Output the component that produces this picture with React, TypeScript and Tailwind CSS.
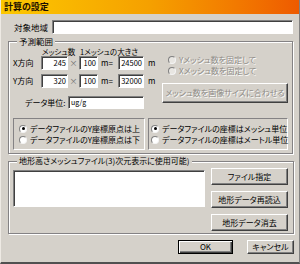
import React from "react";

const sunken =
  "bg-white border border-t-[#808080] border-l-[#808080] border-r-white border-b-white shadow-[inset_1px_1px_0_#404040]";
const raised =
  "border border-t-white border-l-white border-r-[#404040] border-b-[#404040] shadow-[inset_-1px_-1px_0_#808080] flex items-center justify-center whitespace-nowrap";
const disabledText = "text-[#8e8b86] [text-shadow:1px_1px_0_#ffffff]";

const Radio = ({ checked = false, disabled = false }: { checked?: boolean; disabled?: boolean }) => (
  <span
    className={
      "w-[8px] h-[8px] rounded-full border border-t-[#808080] border-l-[#808080] border-r-[#f4f4f4] border-b-[#f4f4f4] flex items-center justify-center shrink-0 " +
      (disabled ? "bg-[#e8e6e2]" : "bg-white")
    }
  >
    {checked && <span className="w-[3px] h-[3px] rounded-full bg-black" />}
  </span>
);

const NumBox = ({ value, w }: { value: string; w: string }) => (
  <div className={sunken + " h-[14px] text-right pr-[1px] leading-[12px] text-[7.5px] " + w}>{value}</div>
);

const MeshRow = ({ label, count, size, total }: { label: string; count: string; size: string; total: string }) => (
  <div className="flex items-center h-[14px]">
    <span className="w-[28px]">{label}</span>
    <NumBox value={count} w="w-[27px]" />
    <span className="w-[11px] text-center text-[#707070]">×</span>
    <NumBox value={size} w="w-[19px]" />
    <span className="w-[20px] pl-[3px]">m=</span>
    <NumBox value={total} w="w-[26px]" />
    <span className="pl-[4px]">m</span>
  </div>
);

export default function App() {
  return (
    <div className="w-[300px] h-[264px] bg-[#d5d1ca] flex flex-col overflow-hidden whitespace-nowrap border-l border-l-[#eeeae4] border-r border-r-[#808080] border-b-2 border-b-[#505050] text-[8px] leading-[10px] text-black font-['Noto_Sans_CJK_JP','Liberation_Sans',sans-serif] [font-feature-settings:'palt']">
      <div className="h-[14px] shrink-0 bg-gradient-to-r from-[#fcc800] via-[#f5a000] to-[#ee5a00] pl-[3px] text-[9px] leading-[14px] font-bold text-[#1a0e00]">
        計算の設定
      </div>

      <div className="flex items-center mt-[6px] h-[14px]">
        <span className="w-[51px] pl-[13px] text-[8.5px]">対象地域</span>
        <div className={sunken + " w-[241px] h-[14px]"} />
      </div>

      <fieldset className="ml-[7px] mt-[2px] w-[285px] h-[118px] border border-[#848284] shadow-[inset_1px_1px_0_#fff,1px_1px_0_#fff] pl-[4px]">
        <legend className="ml-[4px] px-[2px] bg-[#d5d1ca] leading-[10px] text-[8.5px]">予測範囲</legend>
        <div className="flex">
          <div className="w-[149px] flex flex-col pt-[1px]">
            <div className="flex h-[9px] leading-[9px] text-[7.5px]">
              <span className="ml-[29px] w-[38px]">メッシュ数</span>
              <span>1メッシュの大きさ</span>
            </div>
            <MeshRow label="X方向" count="245" size="100" total="24500" />
            <div className="mt-[4px]">
              <MeshRow label="Y方向" count="320" size="100" total="32000" />
            </div>
            <div className="flex items-center mt-[8px] h-[13px]">
              <span className="pl-[12px] w-[55px]">データ単位:</span>
              <div className={sunken + " w-[76px] h-[13px] pl-[2px] leading-[11px] text-[7px]"}>ug/g</div>
            </div>
          </div>
          <div className="flex flex-col pt-[9px]">
            <div className="flex flex-col gap-[2px] pl-[6px]">
              <div className="flex items-center gap-[3px] h-[9px]">
                <Radio disabled />
                <span className={disabledText}>Yメッシュ数を固定して</span>
              </div>
              <div className="flex items-center gap-[3px] h-[9px]">
                <Radio disabled />
                <span className={disabledText}>Xメッシュ数を固定して</span>
              </div>
            </div>
            <div className={raised + " mt-[8px] w-[126px] h-[20px] " + disabledText}>
              メッシュ数を画像サイズに合わせる
            </div>
          </div>
        </div>
        <div className="flex gap-[3px] mt-[9px]">
          <div className="w-[132px] h-[32px] border border-t-[#848284] border-l-[#848284] border-r-white border-b-white flex flex-col justify-center gap-[2px] pl-[5px]">
            <div className="flex items-center gap-[3px] h-[9px]">
              <Radio checked />
              <span>データファイルのY座標原点は上</span>
            </div>
            <div className="flex items-center gap-[3px] h-[9px]">
              <Radio />
              <span>データファイルのY座標原点は下</span>
            </div>
          </div>
          <div className="w-[140px] h-[32px] border border-t-[#848284] border-l-[#848284] border-r-white border-b-white flex flex-col justify-center gap-[2px] pl-[2px]">
            <div className="flex items-center gap-[3px] h-[9px]">
              <Radio checked />
              <span>データファイルの座標はメッシュ単位</span>
            </div>
            <div className="flex items-center gap-[3px] h-[9px]">
              <Radio />
              <span>データファイルの座標はメートル単位</span>
            </div>
          </div>
        </div>
      </fieldset>

      <fieldset className="ml-[7px] mt-[2px] w-[286px] h-[78px] border border-[#848284] shadow-[inset_1px_1px_0_#fff,1px_1px_0_#fff] pl-[4px] pt-[2px]">
        <legend className="ml-[4px] px-[2px] bg-[#d5d1ca] leading-[10px]">
          地形高さメッシュファイル(3)次元表示に使用可能)
        </legend>
        <div className="flex gap-[6px]">
          <div className={sunken + " w-[192px] h-[37px] mt-[2px]"} />
          <div className="flex flex-col gap-[6px]">
            <div className={raised + " w-[77px] h-[17px]"}>ファイル指定</div>
            <div className={raised + " w-[77px] h-[17px]"}>地形データ再読込</div>
            <div className={raised + " w-[77px] h-[17px]"}>地形データ消去</div>
          </div>
        </div>
      </fieldset>

      <div className="flex justify-end gap-[14px] mt-[6px] pr-[5px]">
        <div className="w-[55px] h-[14px] border border-black shadow-[inset_1px_1px_0_#fff,inset_-1px_-1px_0_#404040,inset_-2px_-2px_0_#808080] flex items-center justify-center">
          OK
        </div>
        <div className={raised + " w-[47px] h-[14px]"}>キャンセル</div>
      </div>
    </div>
  );
}
